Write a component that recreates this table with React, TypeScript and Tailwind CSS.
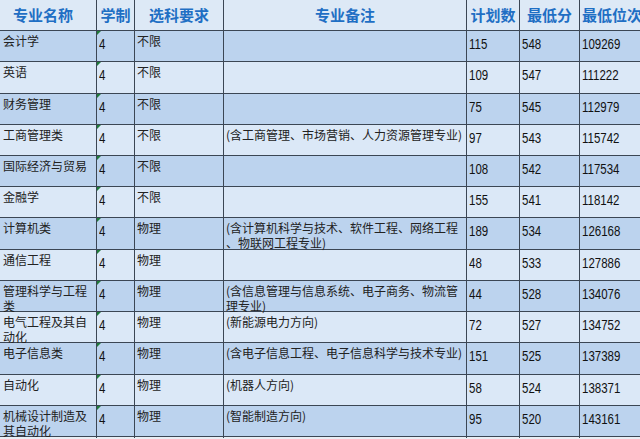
import React from "react";

type Row = {
  name: React.ReactNode;
  req: string;
  note?: React.ReactNode;
  plan: string;
  score: string;
  rank: string;
};

const rows: Row[] = [
  { name: "会计学", req: "不限", plan: "115", score: "548", rank: "109269" },
  { name: "英语", req: "不限", plan: "109", score: "547", rank: "111222" },
  { name: "财务管理", req: "不限", plan: "75", score: "545", rank: "112979" },
  { name: "工商管理类", req: "不限", note: "(含工商管理、市场营销、人力资源管理专业)", plan: "97", score: "543", rank: "115742" },
  { name: "国际经济与贸易", req: "不限", plan: "108", score: "542", rank: "117534" },
  { name: "金融学", req: "不限", plan: "155", score: "541", rank: "118142" },
  { name: "计算机类", req: "物理", note: (<>(含计算机科学与技术、软件工程、网络工程<br />、物联网工程专业)</>), plan: "189", score: "534", rank: "126168" },
  { name: "通信工程", req: "物理", plan: "48", score: "533", rank: "127886" },
  { name: (<>管理科学与工程<br />类</>), req: "物理", note: (<>(含信息管理与信息系统、电子商务、物流管<br />理专业)</>), plan: "44", score: "528", rank: "134076" },
  { name: (<>电气工程及其自<br />动化</>), req: "物理", note: "(新能源电力方向)", plan: "72", score: "527", rank: "134752" },
  { name: "电子信息类", req: "物理", note: "(含电子信息工程、电子信息科学与技术专业)", plan: "151", score: "525", rank: "137389" },
  { name: "自动化", req: "物理", note: "(机器人方向)", plan: "58", score: "524", rank: "138371" },
  { name: (<>机械设计制造及<br />其自动化</>), req: "物理", note: "(智能制造方向)", plan: "95", score: "520", rank: "143161" },
];

const grid = "grid grid-cols-[97px_38px_89px_243px_53px_60px_80px]";
const cjk = { fontFamily: '"Noto Sans CJK SC", "Noto Sans", sans-serif' };
const num = { fontFamily: '"Liberation Sans", Arial, sans-serif' };

function Num({ v }: { v: string }) {
  return (
    <span className="inline-block origin-left scale-x-[0.82] text-[14px] leading-[15px] text-[#111]" style={num}>
      {v}
    </span>
  );
}

export default function App() {
  const headers = ["专业名称", "学制", "选科要求", "专业备注", "计划数", "最低分", "最低位次"];
  return (
    <div className="w-[640px] h-[439px] overflow-hidden bg-[#e9eef4]">
      <div className="w-[660px]">
        <div className={`${grid} h-[31px] bg-[#dde9f6] border-b border-[#3b4654]`}>
          {headers.map((h, i) => (
            <div
              key={h}
              className={`flex items-center pt-[1px] text-[15px] font-bold text-[#1f6fc4] whitespace-nowrap ${i < 6 ? "justify-center border-r border-[#3b4654]" : "justify-start pl-[2px]"} ${i === 0 ? "pr-[10px]" : ""}`}
              style={cjk}
            >
              {h}
            </div>
          ))}
        </div>
        {rows.map((r, idx) => {
          const bg = idx % 2 === 0 ? "bg-[#bcd3ee]" : "bg-[#dbe8f7]";
          const h = idx % 4 === 3 ? "h-[31px]" : "h-[31.3px]";
          return (
            <div key={idx} className={`${grid} ${h} ${bg} border-b border-[#3b4654]`}>
              <div className="border-r border-[#3b4654] pl-[3px] pt-[2px] text-[12px] leading-[15px] text-[#222] whitespace-nowrap" style={cjk}>
                {r.name}
              </div>
              <div className="relative border-r border-[#3b4654] pl-[2px]">
                <span className="absolute left-0 top-0 w-0 h-0 border-t-[4px] border-r-[4px] border-t-[#1f7a3a] border-r-transparent" />
                <Num v="4" />
              </div>
              <div className="border-r border-[#3b4654] pl-[2px] pt-[2px] text-[12px] leading-[15px] text-[#222]" style={cjk}>
                {r.req}
              </div>
              <div className="border-r border-[#3b4654] pl-[2px] pt-[2px] text-[12px] leading-[15px] text-[#222] whitespace-nowrap" style={cjk}>
                {r.note}
              </div>
              <div className="border-r border-[#3b4654] pl-[2px]">
                <Num v={r.plan} />
              </div>
              <div className="border-r border-[#3b4654] pl-[2px]">
                <Num v={r.score} />
              </div>
              <div className="pl-[2px]">
                <Num v={r.rank} />
              </div>
            </div>
          );
        })}
      </div>
    </div>
  );
}
